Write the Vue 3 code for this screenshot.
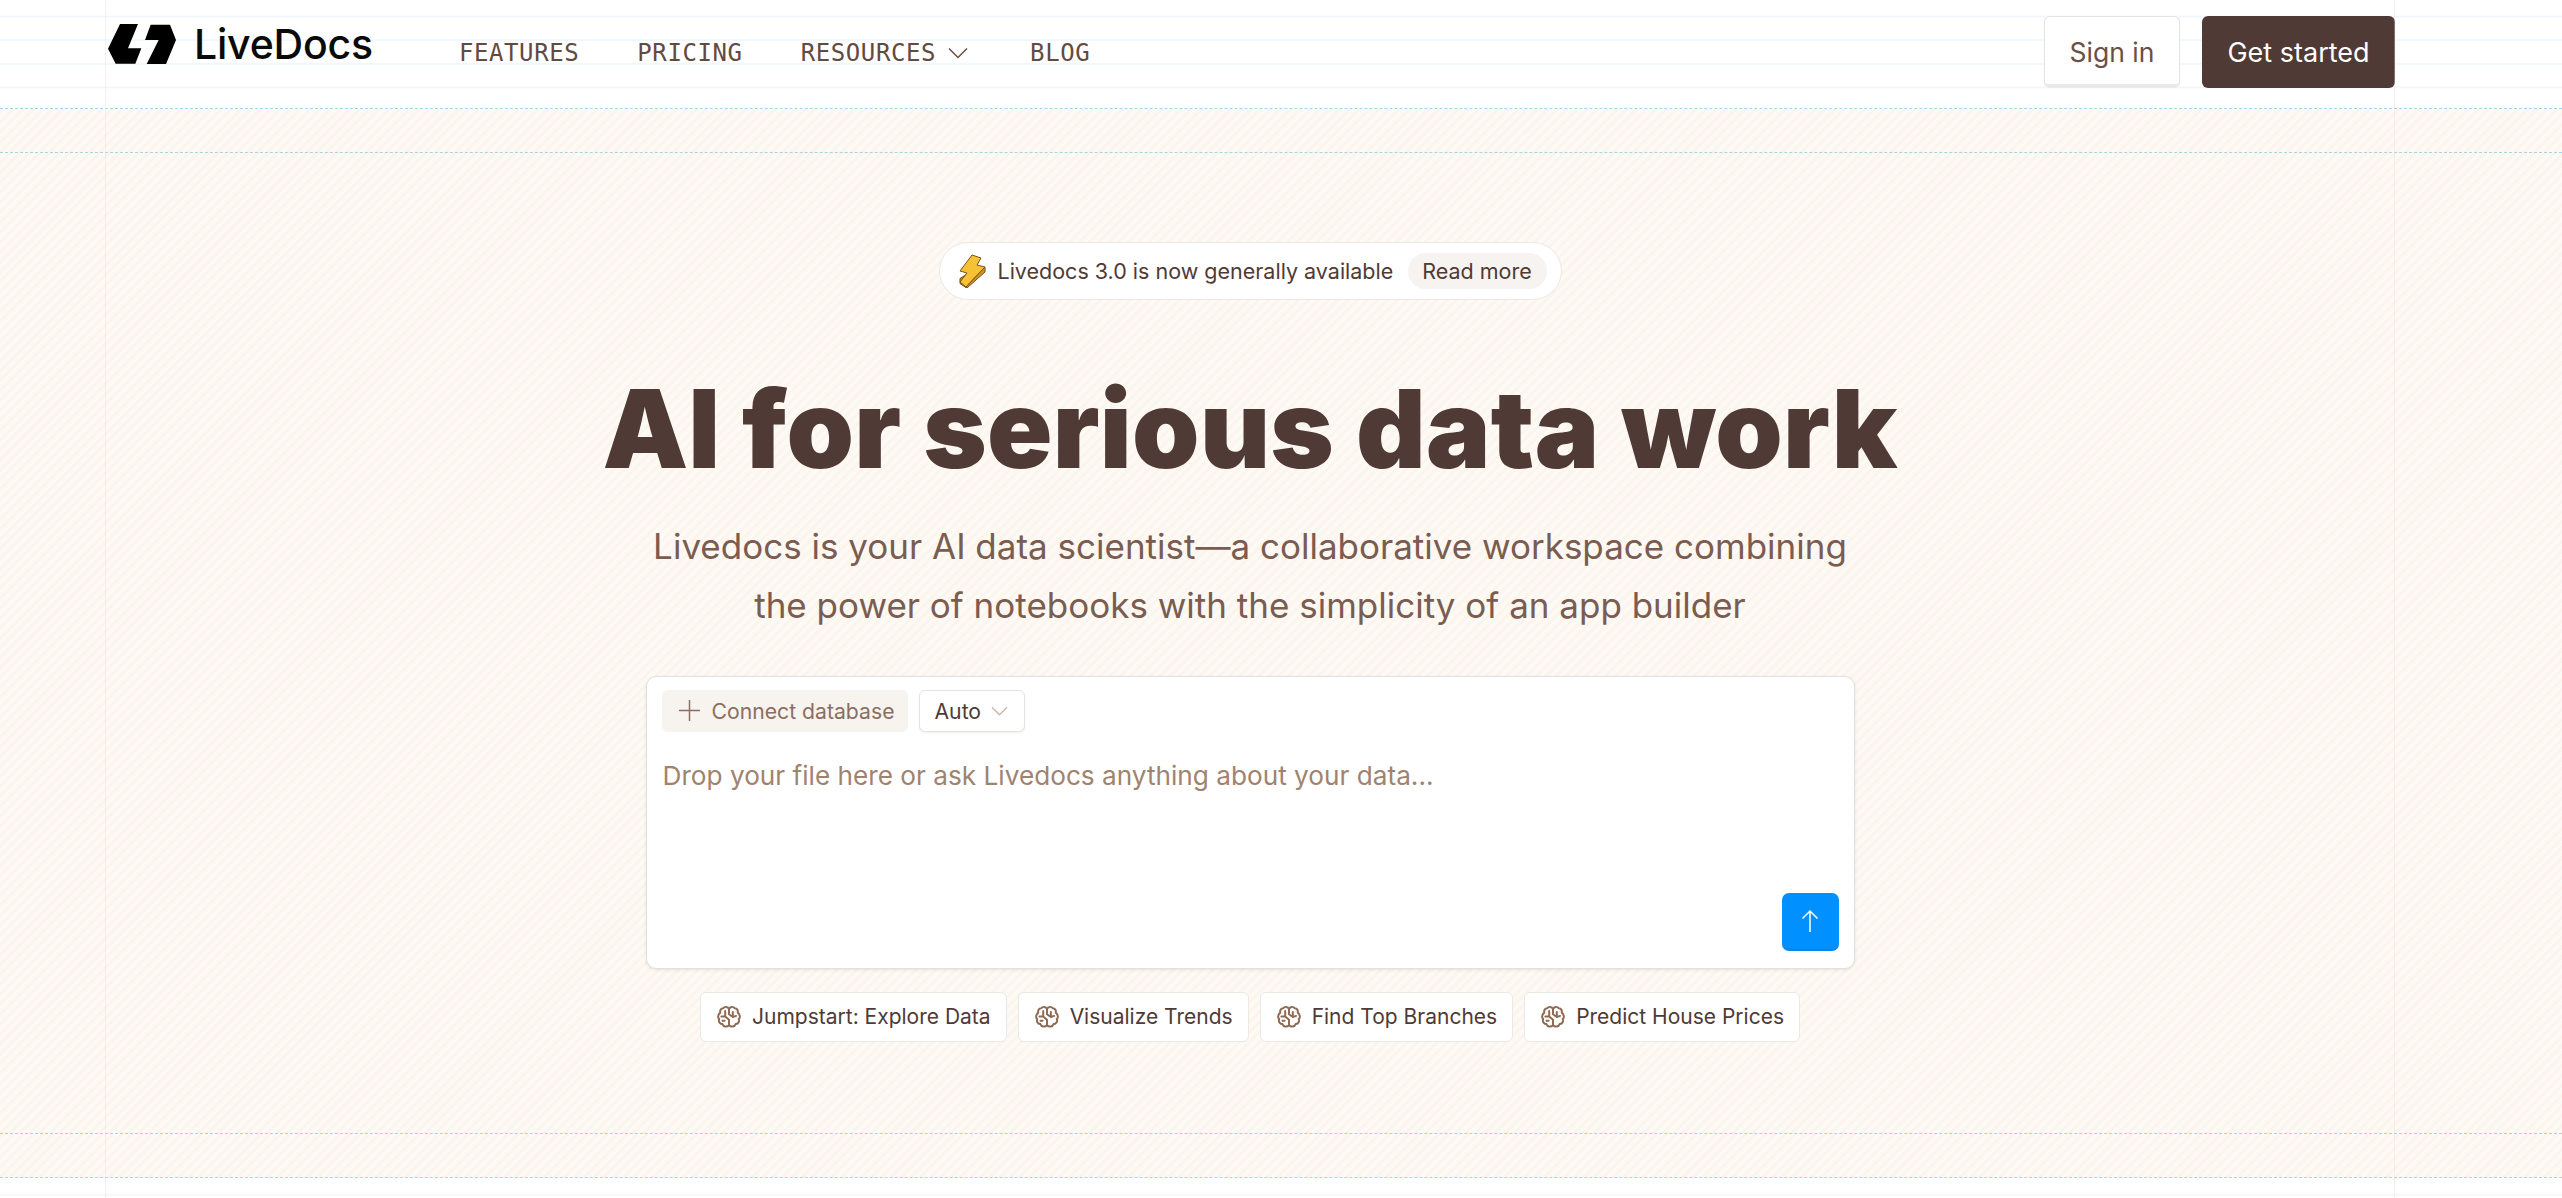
<script setup>
const navLinks = [
  { label: "FEATURES" },
  { label: "PRICING" },
  { label: "RESOURCES", caret: true },
  { label: "BLOG" },
];

const starters = [
  "Jumpstart: Explore Data",
  "Visualize Trends",
  "Find Top Branches",
  "Predict House Prices",
];
</script>

<template>
  <div class="page">
    <header class="ruled">
      <div class="shell nav">
        <a class="brand">
          <svg class="brand-mark" viewBox="52 42 204 120">
            <polygon points="88,42 142,42 112,115 152,115 134,161 75,161 52,116" />
            <polygon points="180,44 238,44 256,90 226,162 168,162 204,90 163,90" />
          </svg>
          <span>LiveDocs</span>
        </a>
        <nav class="links">
          <a v-for="link in navLinks" :key="link.label" class="link">
            {{ link.label }}
            <svg v-if="link.caret" class="caret" viewBox="0 0 20 12">
              <path d="M1 1.5l9 9 9-9" />
            </svg>
          </a>
        </nav>
        <div class="actions">
          <button class="btn-light">Sign in</button>
          <button class="btn-dark">Get started</button>
        </div>
      </div>
    </header>

    <div class="band"></div>

    <main class="hero-wrap">
      <div class="shell hero">
        <div class="notice">
          <svg class="bolt" viewBox="0 0 27 34">
            <path d="M1 24.5v5l6 4 1-1 12-15v-5z" fill="#c98a1c" stroke="#6d4a12" stroke-width="1" stroke-linejoin="round" />
            <path d="M13 1l9 3-4 7 8 2-19 20-6-5 7-9-7-2z" fill="#f7c136" stroke="#7a5414" stroke-width="1" stroke-linejoin="round" />
            <path d="M7 33l19-20v5L8 34z" fill="#d1921f" stroke="#7a5414" stroke-width="1" stroke-linejoin="round" />
          </svg>
          <span class="notice-text">Livedocs 3.0 is now generally available</span>
          <span class="notice-more">Read more</span>
        </div>

        <h1>AI for serious data work</h1>
        <p class="lead">
          Livedocs is your AI data scientist—a collaborative workspace combining<br />
          the power of notebooks with the simplicity of an app builder
        </p>

        <section class="prompt">
          <div class="prompt-tools">
            <button class="connect">
              <svg class="plus" viewBox="0 0 22 22"><path d="M11 0v22M0 11h22" /></svg>
              Connect database
            </button>
            <button class="model">
              Auto
              <svg class="model-caret" viewBox="0 0 18 10"><path d="M1 1l8 8 8-8" /></svg>
            </button>
          </div>
          <div class="placeholder">Drop your file here or ask Livedocs anything about your data...</div>
          <div class="prompt-foot">
            <button class="send">
              <svg viewBox="0 0 18 24"><path d="M9 23V2M1.5 9.500L9 2l7.500 7.500" /></svg>
            </button>
          </div>
        </section>

        <div class="starters">
          <button v-for="item in starters" :key="item" class="starter">
            <svg class="brain" viewBox="1 1 22 22">
              <path d="M12 4.500C11 2.500 8 2 6.800 4 4.500 4 3.500 6 4 8 1.800 9.500 1.500 12.500 3 14c-.8 2.500.8 4.500 3 4.500.8 2.500 4 3 6 1 2 2 5.200 1.500 6-1 2.200 0 3.800-2 3-4.500 1.500-1.500 1.200-4.500-1-6 .5-2-.5-4-2.800-4C16 2 13 2.500 12 4.500z" />
              <path d="M12 4.500v5M12 9.500l3.500 2.500M15.500 7.500v4.500M15.500 12l3-1M12 14.500l-3.500-3M8.500 11.500H5M8.500 6.500v5M12 14.500v5M8 15.500h-2" />
            </svg>
            {{ item }}
          </button>
        </div>
      </div>
    </main>

    <div class="band"></div>
    <div class="ruled tail"></div>

    <div class="guides"></div>
  </div>
</template>

<style>
html,
body {
  margin: 0;
  background: #fff;
}
</style>

<style scoped>
.page {
  position: relative;
  height: 1198px;
  overflow: hidden;
  font-family: Inter, "Noto Sans", sans-serif;
  color: #4f3a35;
}

.shell {
  width: 2290px;
  margin-left: 105px;
}

.ruled {
  background-color: #fff;
  background-image: linear-gradient(180deg, #fff 0, #fff 21.6px, #f1f7fd 21.6px, #f1f7fd 23.6px);
  background-size: 100% 23.6px;
  background-position: 0 -6px;
}

.ruled,
.band,
.hero-wrap {
  border-bottom: 1px dashed #a9d3e6;
}

header.ruled {
  height: 108px;
}

.tail {
  height: 20px;
  border-bottom: 0;
}

.band,
.hero-wrap {
  background-color: #fdfaf6;
  background-image: repeating-linear-gradient(-45deg, #fdfaf6 0, #fdfaf6 4px, #fbf5ed 4px, #fbf5ed 7px);
}

.band {
  height: 43px;
}

.nav {
  height: 104px;
  display: flex;
  align-items: center;
}

.brand {
  display: flex;
  align-items: center;
  gap: 18px;
  margin: 0 0 16px 3px;
  font-size: 41px;
  font-weight: 500;
  letter-spacing: -0.2px;
  color: #0a0a0a;
}

.brand-mark {
  width: 68px;
  height: 40px;
  fill: #000;
}

.links {
  display: flex;
  gap: 58px;
  margin-left: 86px;
  margin-top: 2px;
}

.link {
  display: flex;
  align-items: center;
  gap: 12px;
  font-family: "DejaVu Sans Mono", monospace;
  font-size: 24px;
  letter-spacing: 0.6px;
  color: #634a40;
}

.caret {
  width: 20px;
  height: 12px;
  margin-right: 4px;
  fill: none;
  stroke: #6b4f45;
  stroke-width: 1.500;
}

.actions {
  display: flex;
  gap: 22px;
  margin-left: auto;
}

button {
  font-family: inherit;
  cursor: pointer;
}

.btn-light,
.btn-dark {
  height: 72px;
  border-radius: 6px;
  font-size: 26.500px;
}

.btn-light {
  width: 136px;
  padding: 3px 0 0;
  background: #fff;
  color: #6b4f45;
  border: 1px solid #e6e2df;
  border-bottom: 4px solid #ebe8e6;
}

.btn-dark {
  width: 193px;
  background: #4f3a35;
  color: #fff;
  border: 0;
  font-size: 27px;
}

.hero {
  height: 980px;
  display: flex;
  flex-direction: column;
  align-items: center;
}

.notice {
  margin-top: 89px;
  height: 58px;
  width: 623px;
  box-sizing: border-box;
  display: flex;
  align-items: center;
  padding: 0 14px 0 19px;
  background: #fff;
  border: 1px solid #ece8e4;
  border-radius: 29px;
  font-size: 21.500px;
  color: #4f3a35;
}

.bolt {
  width: 27px;
  height: 34px;
}

.notice-text {
  margin-left: 12px;
}

.notice-more {
  margin-left: auto;
  height: 36px;
  width: 139px;
  display: flex;
  align-items: center;
  justify-content: center;
  background: #f6f3f0;
  border-radius: 18px;
}

h1 {
  margin: 65px 0 0;
  font-size: 108px;
  line-height: 128px;
  font-weight: 900;
  letter-spacing: 0.3px;
  color: #4f3a35;
}

.lead {
  margin: 24px 0 0;
  font-size: 35px;
  line-height: 58.800px;
  text-align: center;
  color: #7a5c50;
}

.prompt {
  margin-top: 41px;
  width: 1209px;
  height: 293px;
  box-sizing: border-box;
  padding: 13px 15px 17px 15px;
  display: flex;
  flex-direction: column;
  background: #fff;
  border: 1px solid #e4e0dc;
  border-radius: 10px;
  box-shadow: 0 1px 3px rgba(79, 58, 53, 0.12);
}

.prompt-tools {
  display: flex;
  gap: 11px;
}

.connect,
.model {
  height: 42px;
  display: flex;
  align-items: center;
  border-radius: 6px;
  font-size: 21.200px;
}

.connect {
  width: 246px;
  padding: 0 0 0 17px;
  gap: 12px;
  border: 0;
  background: #f7f3ef;
  color: #8a6f60;
}

.plus {
  width: 21px;
  height: 21px;
  fill: none;
  stroke: #8a6f60;
  stroke-width: 1.500;
}

.model {
  width: 106px;
  padding: 0 0 0 15px;
  gap: 10px;
  background: #fff;
  color: #4f3a35;
  border: 1px solid #e6e2df;
  box-shadow: 0 1px 2px rgba(79, 58, 53, 0.08);
}

.model-caret {
  width: 17px;
  height: 10px;
  fill: none;
  stroke: #c4bab2;
  stroke-width: 1.500;
}

.placeholder {
  margin: 26px 0 0 1px;
  font-size: 26.200px;
  line-height: 36px;
  color: #a0836e;
}

.prompt-foot {
  margin-top: auto;
  display: flex;
  justify-content: flex-end;
}

.send {
  width: 57px;
  height: 58px;
  display: flex;
  align-items: center;
  justify-content: center;
  padding: 0;
  border: 0;
  border-bottom: 2px solid #0a86e8;
  border-radius: 7px;
  background: #0090ff;
}

.send svg {
  width: 18px;
  height: 24px;
  fill: none;
  stroke: #fff;
  stroke-width: 1.500;
}

.starters {
  margin-top: 23px;
  display: flex;
  gap: 11px;
}

.starter {
  height: 50px;
  display: flex;
  align-items: center;
  gap: 11px;
  padding: 0 15px 0 16px;
  background: #fff;
  border: 1px solid #ece8e4;
  border-radius: 6px;
  font-size: 21px;
  color: #4f3a35;
}

.brain {
  width: 24px;
  height: 24px;
  fill: none;
  stroke: #8f6a52;
  stroke-width: 1.800;
  stroke-linecap: round;
  stroke-linejoin: round;
}

.guides {
  position: absolute;
  top: 0;
  bottom: 0;
  left: 105px;
  width: 2290px;
  box-sizing: border-box;
  border-left: 1px solid rgba(240, 210, 210, 0.35);
  border-right: 1px solid rgba(240, 210, 210, 0.35);
  pointer-events: none;
}
</style>
